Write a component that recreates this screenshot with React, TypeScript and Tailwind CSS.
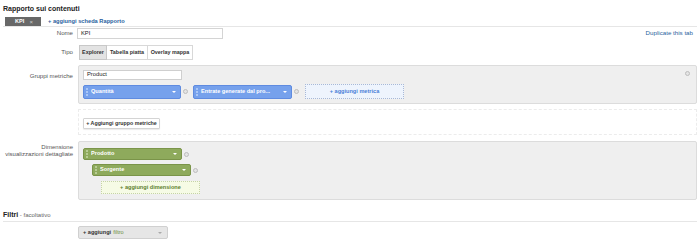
import React from "react";

function Circle() {
  return <div className="w-[5px] h-[5px] rounded-full border border-[#bdbdbd] bg-[#e4e4e4] shrink-0" />;
}

function Caret() {
  return <div className="w-0 h-0 border-l-[2px] border-r-[2px] border-t-[2px] border-l-transparent border-r-transparent border-t-white" />;
}

function Chip({ label, color, border, grip, w, h }: { label: string; color: string; border: string; grip: string; w: string; h: string }) {
  return (
    <div className={`flex items-center ${w} ${h} ${color} ${border} border rounded-[2px] pl-[2px] pr-[4px] shrink-0`}>
      <div className={`h-[8px] border-l-2 border-dotted ${grip}`} />
      <span className="ml-[3px] text-white font-bold text-[5.6px] leading-none flex-1 truncate">{label}</span>
      <Caret />
    </div>
  );
}

export default function App() {
  return (
    <div className="w-[700px] h-[242px] bg-white overflow-hidden text-[#333] font-['Liberation_Sans',Arial,sans-serif]">
      <div className="pl-[3px] pt-[5px] text-[7px] font-bold leading-[8px] text-[#222]">Rapporto sui contenuti</div>

      <div className="mt-[4px] mx-[3px] flex items-end border-b border-[#e6e6e6]">
        <div className="ml-[2px] w-[36px] h-[9px] bg-[#686868] flex items-center justify-between pl-[10px] pr-[8px]">
          <span className="text-white font-bold text-[5.6px] leading-none">KPI</span>
          <span className="text-[#cfcfcf] text-[6px] leading-none">×</span>
        </div>
        <div className="ml-[7px] h-[9px] flex items-center text-[5.7px] font-bold text-[#2a5f9e] leading-none">+ aggiungi scheda Rapporto</div>
      </div>

      <div className="mt-[1px] flex items-center">
        <div className="w-[73px] text-right text-[6.1px] text-[#555] leading-none">Nome</div>
        <div className="ml-[4px] w-[146px] h-[11px] border border-[#d4d4d4] flex items-center pl-[3px] text-[5.8px] text-[#222] leading-none">KPI</div>
        <div className="flex-1" />
        <div className="mr-[7px] text-[6.2px] text-[#2a5f9e] leading-none">Duplicate this tab</div>
      </div>

      <div className="mt-[6px] flex items-center">
        <div className="w-[73px] text-right text-[6.1px] text-[#555] leading-none">Tipo</div>
        <div className="ml-[6px] flex h-[15px] text-[5.4px] font-bold text-[#333] leading-none">
          <div className="w-[28px] h-full flex items-center justify-center bg-[#e3e3e3] border border-[#c8c8c8]">Explorer</div>
          <div className="w-[41px] h-full flex items-center justify-center bg-white border-y border-r border-[#d8d8d8]">Tabella piatta</div>
          <div className="w-[45px] h-full flex items-center justify-center bg-white border-y border-r border-[#d8d8d8]">Overlay mappa</div>
        </div>
      </div>

      <div className="mt-[5px] flex items-start">
        <div className="w-[73px] pt-[8px] text-right text-[6.1px] text-[#555] leading-[6px]">Gruppi metriche</div>
        <div className="relative ml-[5px] mr-[3px] flex-1 h-[39px] bg-[#efefef] border border-[#dcdcdc] rounded-[2px] pl-[4px] pt-[4px]">
          <div className="w-[99px] h-[10px] bg-white border border-[#cfcfcf] flex items-center pl-[3px] text-[5.8px] text-[#222] leading-none">Product</div>
          <div className="mt-[4px] flex items-center">
            <Chip label="Quantità" color="bg-[#76a1ec]" border="border-[#5f8be0]" grip="border-[#a9c6f7]" w="w-[98px]" h="h-[14px]" />
            <div className="ml-[2px] mr-[5px]"><Circle /></div>
            <Chip label="Entrate generate dal pro..." color="bg-[#76a1ec]" border="border-[#5f8be0]" grip="border-[#a9c6f7]" w="w-[99px]" h="h-[14px]" />
            <div className="ml-[2px] mr-[6px]"><Circle /></div>
            <div className="w-[99px] h-[15px] border border-dotted border-[#a9b9d6] bg-[#eef4fd] flex items-center justify-center text-[5.6px] font-bold text-[#4a7fd8] leading-none">+ aggiungi metrica</div>
          </div>
          <div className="absolute top-[5px] right-[6px]"><Circle /></div>
        </div>
      </div>

      <div className="mt-[5px] flex">
        <div className="w-[73px]" />
        <div className="ml-[5px] mr-[3px] flex-1 h-[26px] border border-dashed border-[#ececec] pl-[4px] pt-[8px]">
          <div className="w-[77px] h-[11px] bg-white border border-[#d4d4d4] rounded-[1px] shadow-[0_1px_1px_rgba(0,0,0,0.08)] flex items-center justify-center text-[5.3px] font-bold text-[#333] leading-none">+ Aggiungi gruppo metriche</div>
        </div>
      </div>

      <div className="mt-[6px] flex items-start">
        <div className="w-[73px] pt-[3px] text-right text-[6px] text-[#555] leading-[7px]">Dimensione<br />visualizzazioni dettagliate</div>
        <div className="ml-[5px] mr-[3px] flex-1 h-[59px] bg-[#efefef] border border-[#dcdcdc] rounded-[2px] pl-[4px] pt-[6px]">
          <div className="flex items-center">
            <Chip label="Prodotto" color="bg-[#8eaa5c]" border="border-[#7a9449]" grip="border-[#b8cc93]" w="w-[99px]" h="h-[12px]" />
            <div className="ml-[2px]"><Circle /></div>
          </div>
          <div className="mt-[4px] ml-[9px] flex items-center">
            <Chip label="Sorgente" color="bg-[#8eaa5c]" border="border-[#7a9449]" grip="border-[#b8cc93]" w="w-[99px]" h="h-[12px]" />
            <div className="ml-[2px]"><Circle /></div>
          </div>
          <div className="mt-[5px] ml-[18px] w-[99px] h-[13px] border border-dotted border-[#c6d3a8] bg-[#f6fbe5] flex items-center justify-center text-[5.6px] text-[#5d7f2f] font-bold leading-none">+ aggiungi dimensione</div>
        </div>
      </div>

      <div className="mt-[8px] mx-[3px] pb-[2px] border-b border-[#e6e6e6] leading-[8px]">
        <span className="text-[7px] font-bold text-[#222]">Filtri</span>
        <span className="text-[6px] text-[#666]"> - facoltativo</span>
      </div>

      <div className="mt-[4px] ml-[78px] w-[90px] h-[13px] bg-[#e6e6e6] border border-[#d0d0d0] rounded-[2px] flex items-center pl-[4px] pr-[5px] text-[5.6px] leading-none">
        <span className="font-bold text-[#333]">+ aggiungi</span>
        <span className="ml-[2px] text-[#6f8f3f]">filtro</span>
        <div className="flex-1" />
        <div className="w-0 h-0 border-l-[2px] border-r-[2px] border-t-[2px] border-l-transparent border-r-transparent border-t-[#aaa]" />
      </div>
    </div>
  );
}
